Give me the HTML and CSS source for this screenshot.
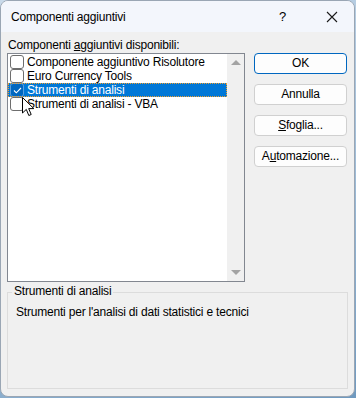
FILE: index.html
```html
<!DOCTYPE html>
<html>
<head>
<meta charset="utf-8">
<link rel="stylesheet" href="styles.css">
</head>
<body>
<div class="window">
  <div class="titlebar">
    <span class="title">Componenti aggiuntivi</span>
    <span class="help">?</span>
    <span class="close"><svg width="12" height="12" viewBox="0 0 12 12"><path d="M1 1L11 11M11 1L1 11" stroke="#1a1a1a" stroke-width="1.1" fill="none"/></svg></span>
  </div>
  <div class="content">
    <div class="top">
      <div class="left">
        <div class="label">Componenti <u>a</u>ggiuntivi disponibili:</div>
        <div class="listbox">
          <div class="items">
            <div class="item"><span class="cb"></span><span>Componente aggiuntivo Risolutore</span></div>
            <div class="item"><span class="cb"></span><span>Euro Currency Tools</span></div>
            <div class="item sel"><span class="cb checked"><svg width="9" height="7" viewBox="0 0 9 7"><path d="M1 3.5L3.3 5.8L8 1" stroke="#ffffff" stroke-width="1.1" fill="none"/></svg></span><span>Strumenti di analisi</span></div>
            <div class="item"><span class="cb"></span><span>Strumenti di analisi - VBA</span></div>
          </div>
          <div class="scroll">
            <span class="arrow up"></span>
            <span class="arrow down"></span>
          </div>
          <svg class="cursor" width="14" height="20" viewBox="0 0 14 20"><path d="M0.5 0.5V16L4.3 12.4L6.8 18.5L9.2 17.5L6.7 11.6H11.8Z" fill="#ffffff" stroke="#000000" stroke-width="1" stroke-linejoin="round"/></svg>
        </div>
      </div>
      <div class="buttons">
        <div class="btn default">OK</div>
        <div class="btn">Annulla</div>
        <div class="btn"><u>S</u>foglia...</div>
        <div class="btn">A<u>u</u>tomazione...</div>
      </div>
    </div>
    <div class="group">
      <div class="legend">Strumenti di analisi</div>
      <div class="desc">Strumenti per l'analisi di dati statistici e tecnici</div>
    </div>
  </div>
</div>
</body>
</html>
```
FILE: styles.css
```css
html, body {
  margin: 0;
  padding: 0;
}
body {
  width: 356px;
  height: 398px;
  background: linear-gradient(160deg, #c9daea 0%, #9bbad6 60%, #6f99bf 100%);
  font-family: "Liberation Sans", Arial, sans-serif;
  font-size: 12px;
  letter-spacing: -0.2px;
  color: #000;
  overflow: hidden;
}
.window {
  width: 353px;
  height: 395px;
  border: 1px solid #9aa6b4;
  border-radius: 8px;
  background: #f0f0f0;
  overflow: hidden;
  display: flex;
  flex-direction: column;
}
.titlebar {
  height: 31px;
  background: #f3f6fc;
  display: flex;
  align-items: center;
  flex-shrink: 0;
}
.title {
  margin-left: 10px;
  font-size: 12px;
  flex: 1;
}
.help {
  width: 14px;
  font-size: 13px;
  margin-right: 33px;
}
.close {
  width: 12px;
  height: 12px;
  margin-right: 16px;
  display: flex;
}
.content {
  padding: 6px 6px 0 6px;
  display: flex;
  flex-direction: column;
}
.top {
  display: flex;
}
.left {
  width: 238px;
}
.label {
  height: 15px;
  line-height: 15px;
  margin-left: 1px;
}
.listbox {
  position: relative;
  height: 227px;
  border: 1px solid #828790;
  background: #fff;
  display: flex;
}
.items {
  flex: 1;
  padding-top: 1px;
}
.item {
  height: 14px;
  line-height: 14px;
  display: flex;
  align-items: center;
  white-space: nowrap;
}
.item.sel {
  background: #0078d7;
  color: #fff;
  outline: 1px dotted #f0a030;
  outline-offset: -1px;
}
.cb {
  width: 12px;
  height: 12px;
  border: 1px solid #6e6e6e;
  border-radius: 3px;
  background: #fff;
  margin: 0 3px 0 2px;
  flex-shrink: 0;
  display: flex;
  align-items: center;
  justify-content: center;
}
.cb.checked {
  background: #0067c0;
  border-color: #5aa0e0;
}
.scroll {
  width: 17px;
  background: #f0f0f0;
  display: flex;
  flex-direction: column;
  justify-content: space-between;
  align-items: center;
  padding: 6px 0;
}
.arrow {
  width: 0;
  height: 0;
  border-left: 5px solid transparent;
  border-right: 5px solid transparent;
}
.arrow.up {
  border-bottom: 5px solid #a3a3a3;
}
.arrow.down {
  border-top: 5px solid #a3a3a3;
}
.cursor {
  position: absolute;
  left: 14px;
  top: 43px;
}
.buttons {
  margin-left: 9px;
  margin-top: 15px;
  display: flex;
  flex-direction: column;
  gap: 10px;
}
.btn {
  width: 91px;
  height: 19px;
  line-height: 19px;
  border: 1px solid #d0d0d0;
  border-radius: 4px;
  background: #fdfdfd;
  text-align: center;
}
.btn.default {
  border-color: #0067c0;
}
.group {
  position: relative;
  margin-top: 10px;
  height: 95px;
  border: 1px solid #dcdcdc;
}
.legend {
  position: absolute;
  top: -9px;
  left: 4px;
  padding: 0 2px;
  background: #f0f0f0;
  line-height: 15px;
}
.desc {
  margin: 12px 0 0 8px;
  line-height: 15px;
}
```
